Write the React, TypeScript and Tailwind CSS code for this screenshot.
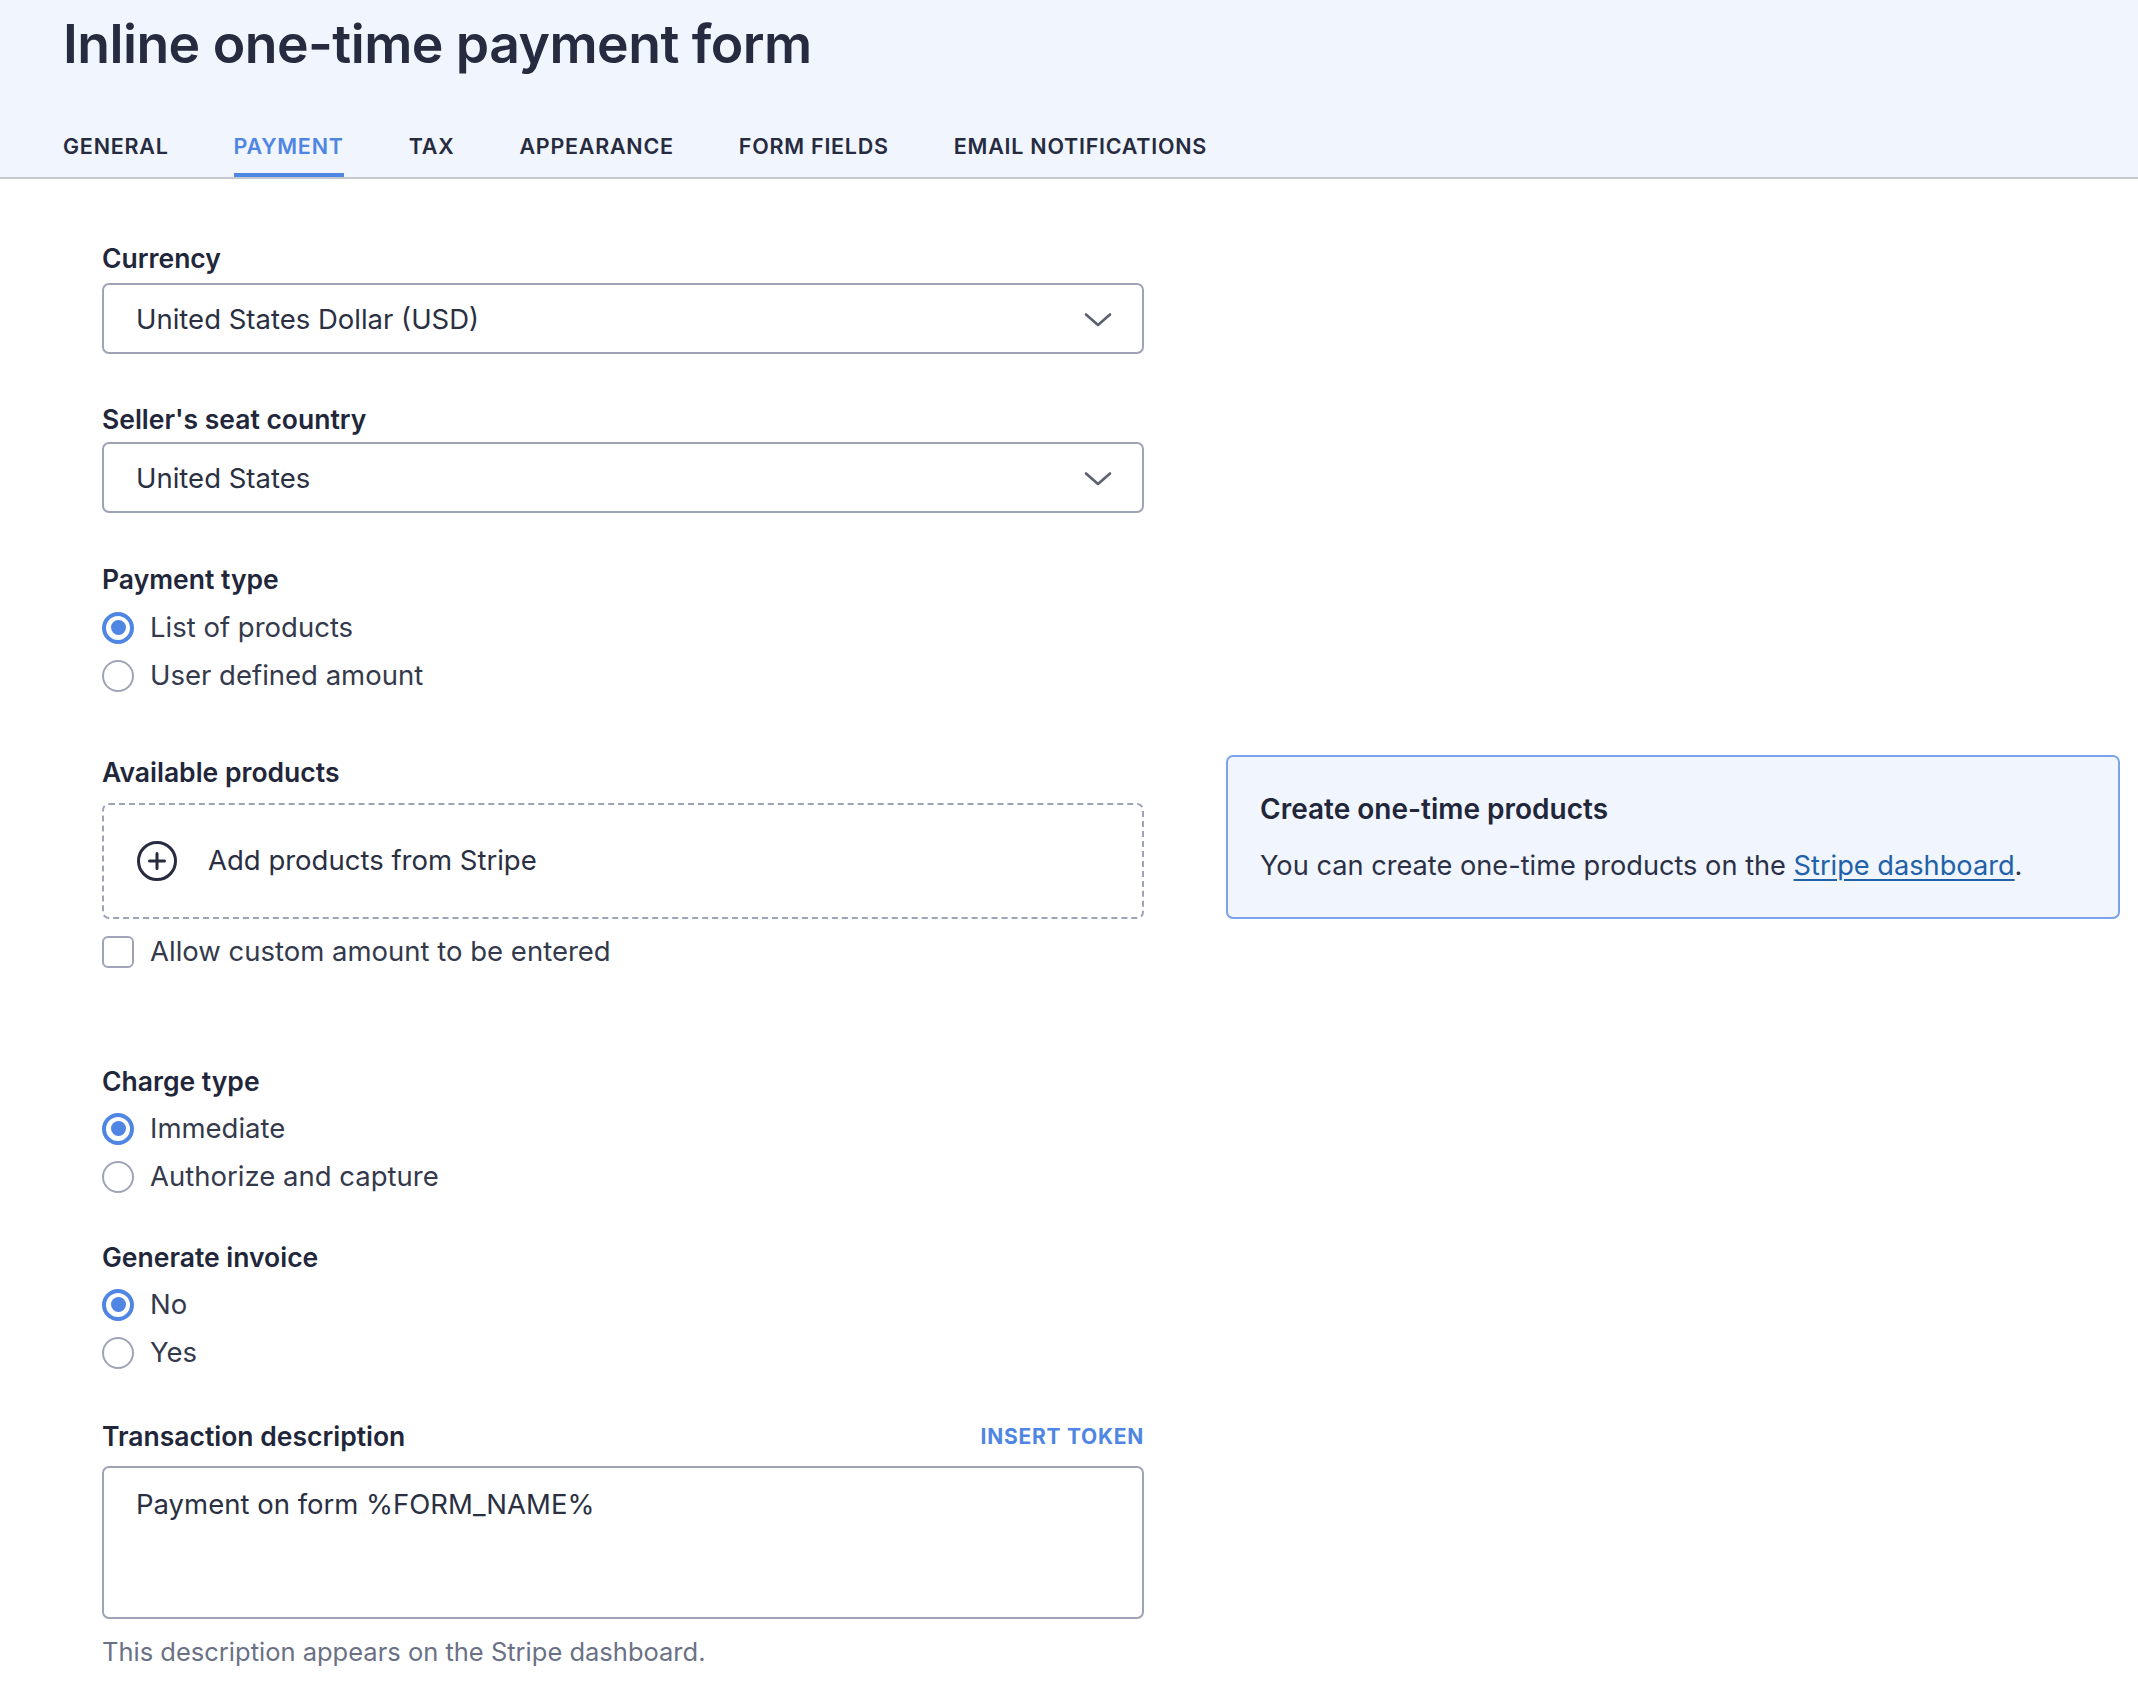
import React from "react";

const tabs = ["General", "Payment", "Tax", "Appearance", "Form fields", "Email notifications"];

function Chevron() {
  return (
    <svg width="28" height="16" viewBox="0 0 28 16" fill="none">
      <path d="M2 2.5L14 13L26 2.5" stroke="#5a5f72" strokeWidth="2.6" strokeLinecap="round" strokeLinejoin="round" />
    </svg>
  );
}

function Select({ value }: { value: string }) {
  return (
    <div className="flex h-[71px] items-center justify-between rounded-[7px] border-2 border-[#9ea3b6] bg-white pt-[3px] pl-[32px] pr-[30px]">
      <span className="text-[27.5px] text-[#2a2f42]">{value}</span>
      <Chevron />
    </div>
  );
}

function Label({ children }: { children: React.ReactNode }) {
  return <div className="text-[26.5px] font-semibold leading-[30px] text-[#21263a]">{children}</div>;
}

function Radio({ label, checked }: { label: string; checked?: boolean }) {
  return (
    <div className="flex h-[40px] items-center gap-[16px]">
      {checked ? (
        <span className="flex h-[32px] w-[32px] items-center justify-center rounded-full border-[4px] border-[#4f86e3] bg-white">
          <span className="h-[15px] w-[15px] rounded-full bg-[#4f86e3]" />
        </span>
      ) : (
        <span className="h-[32px] w-[32px] rounded-full border-2 border-[#a0a4b8] bg-white" />
      )}
      <span className="text-[27.5px] text-[#343a4c]">{label}</span>
    </div>
  );
}

export default function App() {
  return (
    <div className="min-h-screen bg-white font-['Inter','Liberation_Sans',sans-serif]">
      <header className="border-b-2 border-[#c6c8cf] bg-[#f0f5fe] px-[63px] pt-[17px]">
        <h1 className="text-[53.5px] font-semibold leading-none tracking-[-0.01em] text-[#262b3f]">
          Inline one-time payment form
        </h1>
        <nav className="mt-[63px] flex gap-[65px]">
          {tabs.map((t) => (
            <div
              key={t}
              className={
                "border-b-4 pb-[14px] text-[21.5px] font-semibold uppercase leading-[25px] tracking-[0.035em] " +
                (t === "Payment" ? "border-[#4f86e3] text-[#4f86e3]" : "border-transparent text-[#262b3f]")
              }
            >
              {t}
            </div>
          ))}
        </nav>
      </header>

      <main className="px-[102px] pt-[64px] pb-[20px]">
        <div className="w-[1042px]">
          <Label>Currency</Label>
          <div className="mt-[10px]">
            <Select value="United States Dollar (USD)" />
          </div>

          <div className="mt-[50px]">
            <Label>Seller's seat country</Label>
          </div>
          <div className="mt-[8px]">
            <Select value="United States" />
          </div>

          <div className="mt-[51px]">
            <Label>Payment type</Label>
          </div>
          <div className="mt-[14px] flex flex-col gap-[8px]">
            <Radio label="List of products" checked />
            <Radio label="User defined amount" />
          </div>
        </div>

        <div className="mt-[59px] flex items-start gap-[82px]">
          <div className="w-[1042px] shrink-0 pt-[2px]">
            <Label>Available products</Label>
            <div className="mt-[16px] flex h-[116px] items-center gap-[30px] rounded-[7px] border-2 border-dashed border-[#9ea3b6] pl-[32px]">
              <svg width="42" height="42" viewBox="0 0 42 42" fill="none">
                <circle cx="21" cy="21" r="18.5" stroke="#262b3f" strokeWidth="3" />
                <path d="M21 13.5V28.5M13.5 21H28.5" stroke="#262b3f" strokeWidth="3" strokeLinecap="round" />
              </svg>
              <span className="text-[27.5px] text-[#2a2f42]">Add products from Stripe</span>
            </div>
            <div className="mt-[13px] flex h-[40px] items-center gap-[16px]">
              <span className="h-[32px] w-[32px] rounded-[6px] border-2 border-[#a0a4b8] bg-white" />
              <span className="text-[27.5px] text-[#343a4c]">Allow custom amount to be entered</span>
            </div>
          </div>

          <div className="w-[894px] shrink-0 rounded-[7px] border-2 border-[#7aa3ec] bg-[#f0f5fe] px-[32px] pt-[37px] pb-[36px]">
            <div className="text-[28px] font-semibold leading-[30px] text-[#21263a]">Create one-time products</div>
            <p className="mt-[27px] text-[27.2px] leading-[30px] text-[#2b3045]">
              You can create one-time products on the{" "}
              <a href="#" className="text-[#2161a8] underline underline-offset-[4px]">
                Stripe dashboard
              </a>
              .
            </p>
          </div>
        </div>

        <div className="w-[1042px]">
          <div className="mt-[94px]">
            <Label>Charge type</Label>
          </div>
          <div className="mt-[13px] flex flex-col gap-[8px]">
            <Radio label="Immediate" checked />
            <Radio label="Authorize and capture" />
          </div>

          <div className="mt-[45px]">
            <Label>Generate invoice</Label>
          </div>
          <div className="mt-[13px] flex flex-col gap-[8px]">
            <Radio label="No" checked />
            <Radio label="Yes" />
          </div>

          <div className="mt-[48px] flex items-center justify-between">
            <Label>Transaction description</Label>
            <a href="#" className="text-[21px] font-bold uppercase tracking-[0.035em] text-[#4f86e3]">
              Insert token
            </a>
          </div>
          <div className="mt-[14px] h-[153px] rounded-[7px] border-2 border-[#9ea3b6] bg-white px-[32px] pt-[16px]">
            <span className="text-[27.5px] text-[#2a2f42]">Payment on form %FORM_NAME%</span>
          </div>
          <p className="mt-[18px] text-[25.5px] leading-[30px] text-[#6b7185]">
            This description appears on the Stripe dashboard.
          </p>
        </div>
      </main>
    </div>
  );
}
